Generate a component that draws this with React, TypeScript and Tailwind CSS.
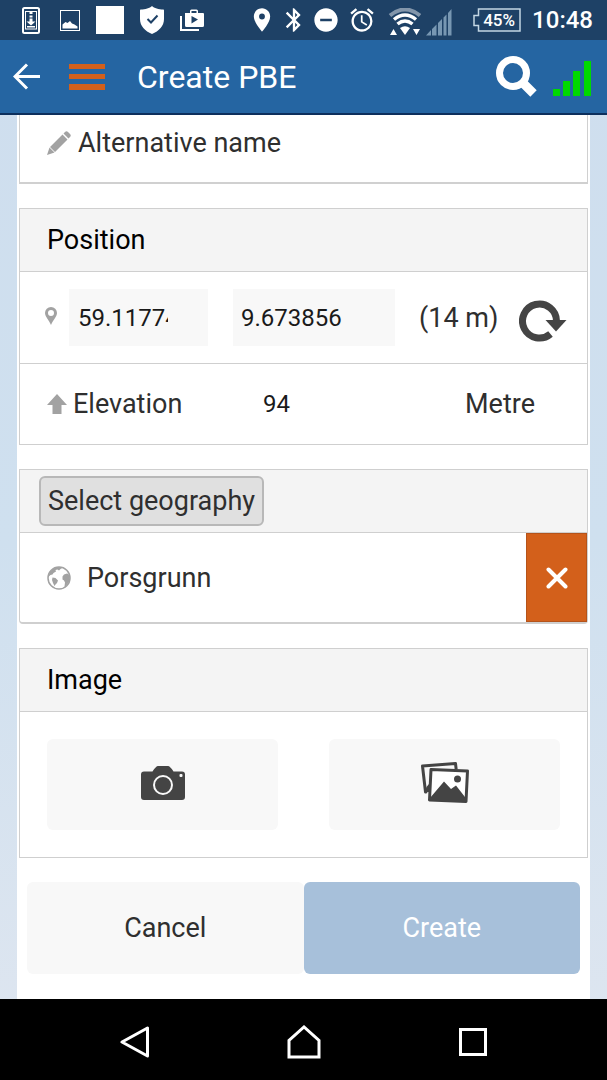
import React, { useState } from 'react';
import { MdPlace, MdBluetooth, MdDoNotDisturbOn, MdAlarm } from 'react-icons/md';

type IconProps = { className?: string };

/* ---------- Status bar icons ---------- */

const PhoneDownloadIcon = ({ className }: IconProps) => (
  <svg className={className} viewBox="0 0 18 27" fill="none" stroke="currentColor">
    <rect x="1" y="1" width="16" height="25" rx="1.5" strokeWidth="2" />
    <rect x="3.5" y="4.5" width="11" height="17.5" strokeWidth="1" />
    <path d="M9 5v2M9 8.500v2" strokeWidth="3" />
    <path d="M9 11.500v5" strokeWidth="3" />
    <path d="M4.500 14.500h9L9 18.500zM5 19h8v1.500H5z" fill="currentColor" stroke="none" />
  </svg>
);

const PictureIcon = ({ className }: IconProps) => (
  <svg className={className} viewBox="0 0 20 21">
    <rect x="0.5" y="0.5" width="19" height="20" fill="none" stroke="currentColor" />
    <path d="M2.500 18.500v-4l3-2.500 2 1 2.500-2 2 2.500 2.500 1 3 2v2z" fill="currentColor" />
  </svg>
);

const ShieldIcon = ({ className }: IconProps) => (
  <svg className={className} viewBox="0 0 24 28">
    <path d="M12 0c2 2 7 3.500 11 3.500 1 0 1 .5 1 1.500v8c0 7-5 12-12 15C5 25 0 20 0 13V5c0-1 0-1.500 1-1.500C5 3.500 10 2 12 0z" fill="currentColor" />
    <path d="M7.500 13l3.500 3.500 6.500-7" fill="none" stroke="#1e4166" strokeWidth="2" />
  </svg>
);

const ShopIcon = ({ className }: IconProps) => (
  <svg className={className} viewBox="0 0 24 22">
    <path d="M1 7v14h18" fill="none" stroke="currentColor" strokeWidth="2" />
    <path d="M5 4h5V2q0-1.500 1.500-1.500h5Q18 .5 18 2v2h5q1 0 1 1v11.500q0 1.500-1.500 1.500h-16Q5 18 5 16.500zM11.500 4h5V2h-5zM11.500 7v7.500l6.500-4z" fill="currentColor" fillRule="evenodd" />
  </svg>
);

const WifiIcon = ({ className }: IconProps) => (
  <svg className={className} viewBox="0 0 34 28" fill="none" stroke="currentColor">
    <path d="M2 7.500Q17-4.500 32 7.500" strokeWidth="4" opacity="0.45" />
    <path d="M6 11.500q11-9 22 0" strokeWidth="3.500" />
    <path d="M9.500 16q7.500-6 15 0" strokeWidth="3.500" />
    <path d="M12 20q5-3.500 10 0l-5 7z" fill="currentColor" stroke="none" />
    <path d="M2 27l3.500-6L9 27zM25 21h7l-3.500 6z" fill="currentColor" stroke="none" />
  </svg>
);

const CellSignalIcon = ({ className }: IconProps) => (
  <svg className={className} viewBox="0 0 26 27">
    <path d="M0 26.500l5-5.500v5.500zM6 26.500V20l4.500-4.500v11zM12 26.500V14l4-4v16.500zM17.500 26.500V8.500l3-3v21zM22 26.500V4l3.500-4v26.500z" fill="currentColor" />
  </svg>
);

const Battery = () => (
  <span className="relative flex h-6 w-12 items-center justify-center pl-1">
    <svg className="absolute inset-0" viewBox="0 0 48 24" fill="none" stroke="#c3d6e4" strokeWidth="1.500">
      <path d="M5.500 1H47v22H5.500v-5.500H1v-10h4.500z" />
    </svg>
    <span className="text-[17px] font-medium leading-none">45%</span>
  </span>
);

/* ---------- App icons ---------- */

const BackArrowIcon = ({ className }: IconProps) => (
  <svg className={className} viewBox="0 0 28 27" fill="none" stroke="currentColor" strokeWidth="3">
    <path d="M27 13.500H2.500M14 1.500l-12 12 12 12" />
  </svg>
);

const MenuIcon = ({ className }: IconProps) => (
  <svg className={className} viewBox="0 0 36 26" fill="currentColor">
    <path d="M0 0h36v5H0zM0 10h36v5H0zM0 20h36v6H0z" />
  </svg>
);

const SearchIcon = ({ className }: IconProps) => (
  <svg className={className} viewBox="0 0 41 41" fill="none" stroke="currentColor">
    <circle cx="17" cy="17" r="13.500" strokeWidth="7" />
    <path d="M27 27l10.500 10.500" strokeWidth="9" />
  </svg>
);

const GpsBarsIcon = ({ className }: IconProps) => (
  <svg className={className} viewBox="0 0 38 35" fill="currentColor">
    <path d="M0 28h7v7H0zM10 20h7v15h-7zM20 10h7v25h-7zM31 0h7v35h-7z" />
  </svg>
);

const PencilIcon = ({ className }: IconProps) => (
  <svg className={className} viewBox="0 0 24 24" fill="currentColor">
    <path d="M0 24l2.500-7.500 5 5zM3 16L15.500 3.500l5 5L8 21zM16.500 2.500L18 1q1.500-1.500 3 0l2 2q1.500 1.500 0 3l-1.500 1.500z" />
  </svg>
);

const MarkerIcon = ({ className }: IconProps) => (
  <svg className={className} viewBox="0 0 12 18" fill="currentColor">
    <path d="M6 0a6 6 0 0 1 6 6c0 3.500-4 7-6 12C4 13 0 9.500 0 6a6 6 0 0 1 6-6zm0 3a3 3 0 1 0 0 6 3 3 0 0 0 0-6z" fillRule="evenodd" />
  </svg>
);

const ArrowUpIcon = ({ className }: IconProps) => (
  <svg className={className} viewBox="0 0 20 20" fill="currentColor">
    <path d="M10 0l10 11h-5.500v9h-9v-9H0z" />
  </svg>
);

const RefreshIcon = ({ className }: IconProps) => (
  <svg className={className} viewBox="0 0 48 42">
    <path d="M31.500 34A17 17 0 1 1 37.500 21" fill="none" stroke="currentColor" strokeWidth="7" />
    <path d="M26.500 20H47.500L37 31.500z" fill="currentColor" />
  </svg>
);

const GlobeIcon = ({ className }: IconProps) => (
  <svg className={className} viewBox="0 0 24 24" fill="currentColor">
    <circle cx="12" cy="12" r="11" fill="none" stroke="currentColor" strokeWidth="1.500" />
    <path d="M3 6Q6 1.500 12 1l3 1-1.500 1L12 4.500 10.500 3.500 8.500 4l.5 1.500L6.500 7l-1 1.500L3.500 9 1 11z" />
    <path d="M5.500 11.500l3 .5 2.500 2.500-1 2.500-1.500 1.500L7.500 20l-1.500-3-1-3z" />
    <path d="M15.500 10.500L17 8.500l3-1 1.500.5 1.500 4-1 4-3 4-1.500.5.5-4-1-2-1.500-1z" />
  </svg>
);

const CloseIcon = ({ className }: IconProps) => (
  <svg className={className} viewBox="0 0 22 22" fill="none" stroke="currentColor" strokeWidth="4" strokeLinecap="round">
    <path d="M2.500 2.500l17 17M19.500 2.500l-17 17" />
  </svg>
);

const CameraIcon = ({ className }: IconProps) => (
  <svg className={className} viewBox="0 0 44 34">
    <path d="M3 5.500h8.500Q15 0 17 0h10q2 0 5.500 5.500H41q3 0 3 3V31q0 3-3 3H3q-3 0-3-3V8.500q0-3 3-3z" fill="currentColor" />
    <circle cx="22" cy="19" r="9" fill="none" stroke="#f8f8f8" strokeWidth="2" />
    <rect x="38.500" y="8" width="3" height="3" rx="1" fill="#f8f8f8" />
  </svg>
);

const GalleryIcon = ({ className }: IconProps) => (
  <svg className={className} viewBox="0 0 48 41" fill="none" stroke="currentColor" strokeWidth="3" strokeLinejoin="round">
    <path d="M6 29.500L4.500 30 1.500 4 34.500 1.500l.7 6" />
    <path d="M4 30l1.500-5L8 22v8z" fill="currentColor" stroke="none" />
    <path d="M10 7.500l36.500 1.500-1.500 30.500-36.500-1.500z" fill="#fff" />
    <path d="M9 36l14-16.500 7 7.500 5-3.500L45.500 37v3L9 38.500z" fill="currentColor" stroke="none" />
    <circle cx="36.500" cy="17" r="3.500" fill="currentColor" stroke="none" />
  </svg>
);

/* ---------- Layout pieces ---------- */

const CardHeader = ({ children }: { children: React.ReactNode }) => (
  <div className="flex h-[63px] items-center border-b border-[#cfcfcf] bg-[#f4f4f4] px-[27px] text-black">{children}</div>
);

const App = () => {
  const [latitude, setLatitude] = useState('59.117742');
  const [longitude, setLongitude] = useState('9.673856');
  const [elevation, setElevation] = useState('94');

  return (
    <div className="flex min-h-screen flex-col bg-linear-to-b from-[#cfdeee] via-[#cfe0ef] to-[#dfe6f0] font-['Roboto',sans-serif] text-[27px] leading-8 text-[#2f2f2f]">
      {/* Status bar */}
      <div className="flex h-10 items-center justify-between bg-[#1e4166] pl-[22px] pr-[14px] text-white">
        <div className="flex items-center gap-4">
          <PhoneDownloadIcon className="mr-1 h-[27px] w-[18px]" />
          <PictureIcon className="h-[21px] w-5" />
          <span className="size-7 bg-white" />
          <ShieldIcon className="h-7 w-6" />
          <ShopIcon className="h-[22px] w-6" />
        </div>
        <div className="flex items-center">
          <MdPlace className="size-7" />
          <MdBluetooth className="ml-1 size-7" />
          <MdDoNotDisturbOn className="ml-1 size-7" />
          <MdAlarm className="ml-2 size-7" />
          <WifiIcon className="ml-3 mt-1 h-7 w-[34px]" />
          <CellSignalIcon className="ml-1 mt-1 h-[27px] w-[26px] text-[#7897b2]" />
          <span className="ml-[21px]">
            <Battery />
          </span>
          <span className="ml-[11px] text-2xl font-medium">10:48</span>
        </div>
      </div>

      {/* Title bar */}
      <header className="flex h-[75px] items-center border-b-2 border-[#0d2f5c] bg-[#2565a2] pl-[13px] pr-4 text-white">
        <button type="button" aria-label="Back">
          <BackArrowIcon className="h-[27px] w-7" />
        </button>
        <button type="button" aria-label="Menu" className="ml-7 text-[#d3601b]">
          <MenuIcon className="h-[26px] w-9" />
        </button>
        <h1 className="ml-8 flex-1 text-[32px]">Create PBE</h1>
        <button type="button" aria-label="Search">
          <SearchIcon className="size-[41px]" />
        </button>
        <GpsBarsIcon className="ml-4 mt-1 h-[35px] w-[38px] text-[#00d900]" />
      </header>

      <main className="mx-[17px] flex flex-1 flex-col gap-6 bg-white px-[2px] pb-6">
        {/* Name */}
        <section className="flex h-[69px] items-start border border-t-0 border-b-2 border-[#d0d0d0] px-[27px] pt-3">
          <label className="flex items-center gap-[7px]">
            <PencilIcon className="size-6 text-[#a2a2a2]" />
            Alternative name
          </label>
        </section>

        {/* Position */}
        <section className="border border-[#cfcfcf]">
          <CardHeader>
            <h2>Position</h2>
          </CardHeader>
          <div className="flex h-[92px] items-center border-b border-[#cfcfcf] pl-[25px] pr-5">
            <MarkerIcon className="mb-1 h-[18px] w-3 text-[#a2a2a2]" />
            <div className="ml-3 h-[57px] w-[139px] bg-[#f8f8f8] pl-[9px] pr-10">
              <input
                aria-label="Latitude"
                value={latitude}
                onChange={(e) => setLatitude(e.target.value)}
                className="size-full bg-transparent text-2xl text-[#1a1a1a] outline-none"
              />
            </div>
            <div className="ml-[25px] h-[57px] w-[162px] bg-[#f8f8f8] px-2">
              <input
                aria-label="Longitude"
                value={longitude}
                onChange={(e) => setLongitude(e.target.value)}
                className="size-full bg-transparent text-2xl text-[#1a1a1a] outline-none"
              />
            </div>
            <span className="ml-6 flex-1 whitespace-nowrap">(14 m)</span>
            <button type="button" aria-label="Refresh position" className="mt-1.5 text-[#444]">
              <RefreshIcon className="h-[42px] w-12" />
            </button>
          </div>
          <div className="flex h-20 items-center px-[27px]">
            <label htmlFor="elevation" className="flex w-[216px] items-center gap-[6px]">
              <ArrowUpIcon className="size-5 text-[#a2a2a2]" />
              Elevation
            </label>
            <input
              id="elevation"
              value={elevation}
              onChange={(e) => setElevation(e.target.value)}
              className="h-14 min-w-0 flex-1 bg-transparent text-2xl text-[#1a1a1a] outline-none"
            />
            <span className="pr-[25px]">Metre</span>
          </div>
        </section>

        {/* Geography */}
        <section className="rounded-b-sm border border-b-2 border-[#cfcfcf]">
          <div className="flex h-[63px] items-center border-b border-[#cfcfcf] bg-[#f4f4f4] px-[19px]">
            <button type="button" className="h-[50px] rounded-md border-2 border-[#b8b8b8] bg-[#e0e0e0] px-[7px]">
              Select geography
            </button>
          </div>
          <div className="flex h-[89px] items-center pl-[27px]">
            <GlobeIcon className="size-6 text-[#a2a2a2]" />
            <span className="ml-4 flex-1">Porsgrunn</span>
            <button
              type="button"
              aria-label="Remove Porsgrunn"
              className="flex h-full w-[61px] items-center justify-center border border-[#b5531a] bg-[#d3601b] text-white"
            >
              <CloseIcon className="size-[22px]" />
            </button>
          </div>
        </section>

        {/* Image */}
        <section className="border border-[#cfcfcf]">
          <CardHeader>
            <h2>Image</h2>
          </CardHeader>
          <div className="grid grid-cols-2 gap-[51px] px-[27px] py-[27px] text-[#444]">
            <button type="button" aria-label="Take photo" className="flex h-[91px] items-center justify-center rounded-md bg-[#f8f8f8]">
              <CameraIcon className="mb-1 h-[34px] w-11" />
            </button>
            <button type="button" aria-label="Choose picture" className="flex h-[91px] items-center justify-center rounded-md bg-[#f8f8f8]">
              <GalleryIcon className="mb-1 h-[41px] w-12" />
            </button>
          </div>
        </section>

        <div className="grid grid-cols-2 px-2">
          <button type="button" className="h-[92px] rounded-md bg-[#f8f8f8]">
            Cancel
          </button>
          <button type="button" className="h-[92px] rounded-md bg-[#a7c0da] text-white">
            Create
          </button>
        </div>
      </main>

      {/* System navigation */}
      <nav className="flex h-[81px] items-center justify-around bg-black px-[51px] pt-1 text-white">
        <button type="button" aria-label="System back">
          <svg className="h-8 w-[30px]" viewBox="0 0 30 32" fill="none" stroke="currentColor" strokeWidth="3" strokeLinejoin="round">
            <path d="M27.500 2v28L2 16z" />
          </svg>
        </button>
        <button type="button" aria-label="Home">
          <svg className="h-[34px] w-[34px]" viewBox="0 0 34 34" fill="none" stroke="currentColor" strokeWidth="3">
            <path d="M2 32V15.500L17 2l15 13.500V32z" />
          </svg>
        </button>
        <button type="button" aria-label="Recent apps">
          <svg className="h-7 w-7" viewBox="0 0 28 28" fill="none" stroke="currentColor" strokeWidth="3">
            <rect x="1.500" y="1.500" width="25" height="25" />
          </svg>
        </button>
      </nav>
    </div>
  );
};

export default App;
